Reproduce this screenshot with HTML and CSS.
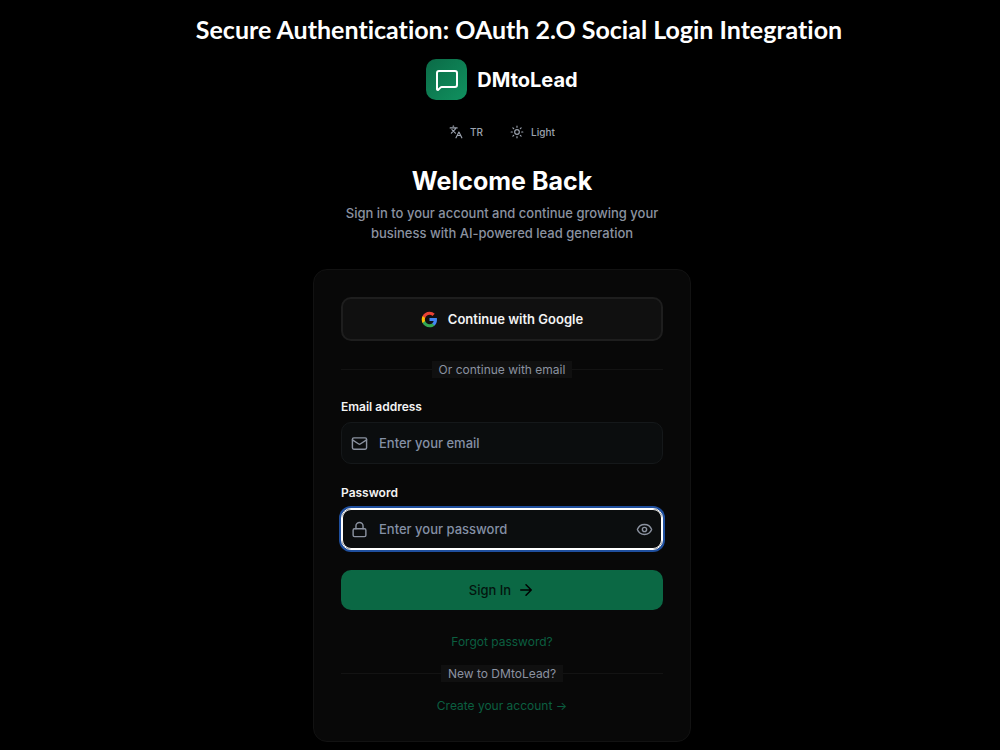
FILE: index.html
```html
<!DOCTYPE html>
<html lang="en">
<head>
    <meta charset="UTF-8">
    <meta name="viewport" content="width=device-width, initial-scale=1.0">
    <title>DMtoLead - Sign In</title>
    <link rel="stylesheet" href="styles.css">
</head>
<body>

<h1 class="banner">Secure Authentication: OAuth 2.O Social Login Integration</h1>

<main class="container">
    <div class="brand">
        <span class="brand-logo">
            <svg class="icon" width="24" height="24" viewBox="0 0 24 24"><path d="M22 17a2 2 0 0 1-2 2H6.828a2 2 0 0 0-1.414.586l-2.202 2.202A.71.71 0 0 1 2 21.286V5a2 2 0 0 1 2-2h16a2 2 0 0 1 2 2z"/></svg>
        </span>
        <span class="brand-name">DMtoLead</span>
    </div>

    <!-- Language and theme -->
    <div class="options">
        <button type="button" class="option-button">
            <svg class="icon" width="14" height="14" viewBox="0 0 24 24"><path d="m5 8 6 6M4 14l6-6 2-3M2 5h12M7 2h1M22 22l-5-10-5 10M14 18h6"/></svg>
            TR
        </button>
        <button type="button" class="option-button">
            <svg class="icon" width="14" height="14" viewBox="0 0 24 24"><circle cx="12" cy="12" r="4"/><path d="M12 2v2M12 20v2M4.93 4.93l1.41 1.41M17.66 17.66l1.41 1.41M2 12h2M20 12h2M6.34 17.66l-1.41 1.41M19.07 4.93l-1.41 1.41"/></svg>
            Light
        </button>
    </div>

    <h2>Welcome Back</h2>
    <p class="intro">Sign in to your account and continue growing your business with AI-powered lead generation</p>

    <div class="card">
        <button type="button" class="google-button">
            <svg width="17" height="17" viewBox="0 0 24 24">
                <path fill="#4285F4" d="M22.56 12.25c0-.78-.07-1.53-.2-2.25H12v4.26h5.92c-.26 1.37-1.04 2.53-2.21 3.31v2.77h3.57c2.08-1.92 3.28-4.74 3.28-8.09z"/>
                <path fill="#34A853" d="M12 23c2.97 0 5.46-.98 7.28-2.66l-3.57-2.77c-.98.66-2.23 1.06-3.71 1.06-2.86 0-5.29-1.93-6.16-4.53H2.18v2.84C3.99 20.53 7.7 23 12 23z"/>
                <path fill="#FBBC05" d="M5.84 14.09c-.22-.66-.35-1.36-.35-2.09s.13-1.43.35-2.09V7.07H2.18C1.43 8.55 1 10.22 1 12s.43 3.45 1.18 4.93l2.85-2.22.81-.62z"/>
                <path fill="#EA4335" d="M12 5.38c1.62 0 3.06.56 4.21 1.64l3.15-3.15C17.45 2.09 14.97 1 12 1 7.7 1 3.99 3.47 2.18 7.07l3.66 2.84c.87-2.6 3.3-4.53 6.16-4.53z"/>
            </svg>
            Continue with Google
        </button>

        <div class="divider"><span>Or continue with email</span></div>

        <form>
            <div class="field">
                <label for="email">Email address</label>
                <div class="input-box">
                    <svg class="icon" width="17" height="17" viewBox="0 0 24 24"><rect x="2" y="4" width="20" height="16" rx="2"/><path d="m22 7-8.97 5.7a1.94 1.94 0 0 1-2.06 0L2 7"/></svg>
                    <input type="email" id="email" placeholder="Enter your email">
                </div>
            </div>
            <div class="field">
                <label for="password">Password</label>
                <div class="input-box active">
                    <svg class="icon" width="17" height="17" viewBox="0 0 24 24"><rect x="3" y="11" width="18" height="11" rx="2"/><path d="M7 11V7a5 5 0 0 1 10 0v4"/></svg>
                    <input type="password" id="password" placeholder="Enter your password">
                    <button type="button" class="eye-button" aria-label="Show password">
                        <svg class="icon" width="17" height="17" viewBox="0 0 24 24"><path d="M2.06 12.35a1 1 0 0 1 0-.7 10.75 10.75 0 0 1 19.88 0 1 1 0 0 1 0 .7 10.75 10.75 0 0 1-19.88 0"/><circle cx="12" cy="12" r="3"/></svg>
                    </button>
                </div>
            </div>
            <button type="submit" class="submit-button">
                Sign In
                <svg class="icon" width="18" height="18" viewBox="0 0 24 24"><path d="M5 12h14M12 5l7 7-7 7"/></svg>
            </button>
        </form>

        <div class="links">
            <a href="#">Forgot password?</a>
            <div class="divider"><span>New to DMtoLead?</span></div>
            <a href="#">Create your account →</a>
        </div>
    </div>
</main>

</body>
</html>
```

FILE: styles.css
```css
* {
    box-sizing: border-box;
}

body {
    font-family: Inter, sans-serif;
    background-color: #000;
    color: #fff;
    margin: 0;
    min-height: 100vh;
}
button, input {
    font-family: inherit;
}
button {
    cursor: pointer;
}
.icon {
    fill: none;
    stroke: currentColor;
    stroke-width: 2;
    stroke-linecap: round;
    stroke-linejoin: round;
    flex: none;
}
.banner {
    font-family: Lato, sans-serif;
    font-size: 25px;
    line-height: 28px;
    font-weight: 700;
    font-variant-ligatures: none;
    text-align: center;
    margin: 0;
    padding: 15px 0 16px 38px;
}
.container {
    display: flex;
    flex-direction: column;
    align-items: center;
    padding: 0 0 8px 4px;
}

/* Logo */
.brand {
    display: flex;
    align-items: center;
    gap: 10px;
}
.brand-logo {
    display: flex;
    align-items: center;
    justify-content: center;
    width: 41px;
    height: 41px;
    border-radius: 10px;
    background: linear-gradient(135deg, #0b6b47, #10915f);
}
.brand-name {
    font-size: 20px;
    line-height: 28px;
    font-weight: 700;
}
.options {
    display: flex;
    gap: 27px;
    margin: 24px 0;
}
.option-button {
    display: flex;
    align-items: center;
    gap: 7px;
    padding: 0;
    border: none;
    background: none;
    color: #9ca3af;
    font-size: 10px;
    line-height: 16px;
    font-weight: 500;
}
h2 {
    font-size: 25px;
    line-height: 34px;
    font-weight: 700;
    margin: 0 0 5px;
}
.intro {
    width: 100%;
    max-width: 340px;
    margin: 0 0 26px;
    color: #8b92a0;
    font-size: 13px;
    line-height: 20px;
    font-weight: 500;
    text-align: center;
}

/* Login card */
.card {
    width: 100%;
    max-width: 378px;
    padding: 27px;
    border: 1px solid #121212;
    border-radius: 14px;
    background-color: #080808;
}
.google-button {
    display: flex;
    align-items: center;
    justify-content: center;
    gap: 10px;
    width: 100%;
    height: 44px;
    margin-bottom: 20px;
    border: 2px solid #1e1e1e;
    border-radius: 10px;
    background-color: #101010;
    color: #f3f3f3;
    font-size: 13px;
    font-weight: 600;
}
.divider {
    display: flex;
    align-items: center;
    width: 100%;
    color: #8b92a0;
    font-size: 12px;
    line-height: 17px;
}
.divider::before,
.divider::after {
    content: "";
    flex: 1;
    height: 1px;
    background-color: #131313;
}
.divider span {
    padding: 0 7px;
    background-color: #101010;
}
form {
    display: flex;
    flex-direction: column;
    gap: 20px;
    margin-top: 20px;
}
.field {
    display: flex;
    flex-direction: column;
    gap: 6px;
}
label {
    color: #f3f3f3;
    font-size: 12px;
    line-height: 18px;
    font-weight: 600;
}
.input-box {
    display: flex;
    align-items: center;
    gap: 11px;
    height: 42px;
    padding: 0 9px;
    border: 1px solid #15181a;
    border-radius: 10px;
    background-color: #0b0d0e;
    color: #8b92a0;
}
.input-box input {
    flex: 1;
    min-width: 0;
    padding: 0;
    border: none;
    outline: none;
    background: none;
    color: #fff;
    font-size: 13px;
    font-weight: 500;
}
.input-box input::placeholder {
    color: #8490a5;
}
.input-box.active {
    border-color: #fff;
    box-shadow: inset 0 0 0 1px #fff, 0 0 0 2px #1f4f9e;
}
.eye-button {
    display: flex;
    padding: 0;
    border: none;
    background: none;
    color: #8b92a0;
}
.submit-button {
    display: flex;
    align-items: center;
    justify-content: center;
    gap: 6px;
    width: 100%;
    height: 40px;
    border: none;
    border-radius: 10px;
    background-color: #0b6844;
    color: #03150e;
    font-size: 13px;
    font-weight: 500;
}
.submit-button .icon {
    color: #000;
}
.links {
    display: flex;
    flex-direction: column;
    align-items: center;
    gap: 15px;
    margin-top: 23px;
}
.links a {
    color: #0b5f40;
    font-size: 12px;
    line-height: 17px;
    text-decoration: none;
}
```
